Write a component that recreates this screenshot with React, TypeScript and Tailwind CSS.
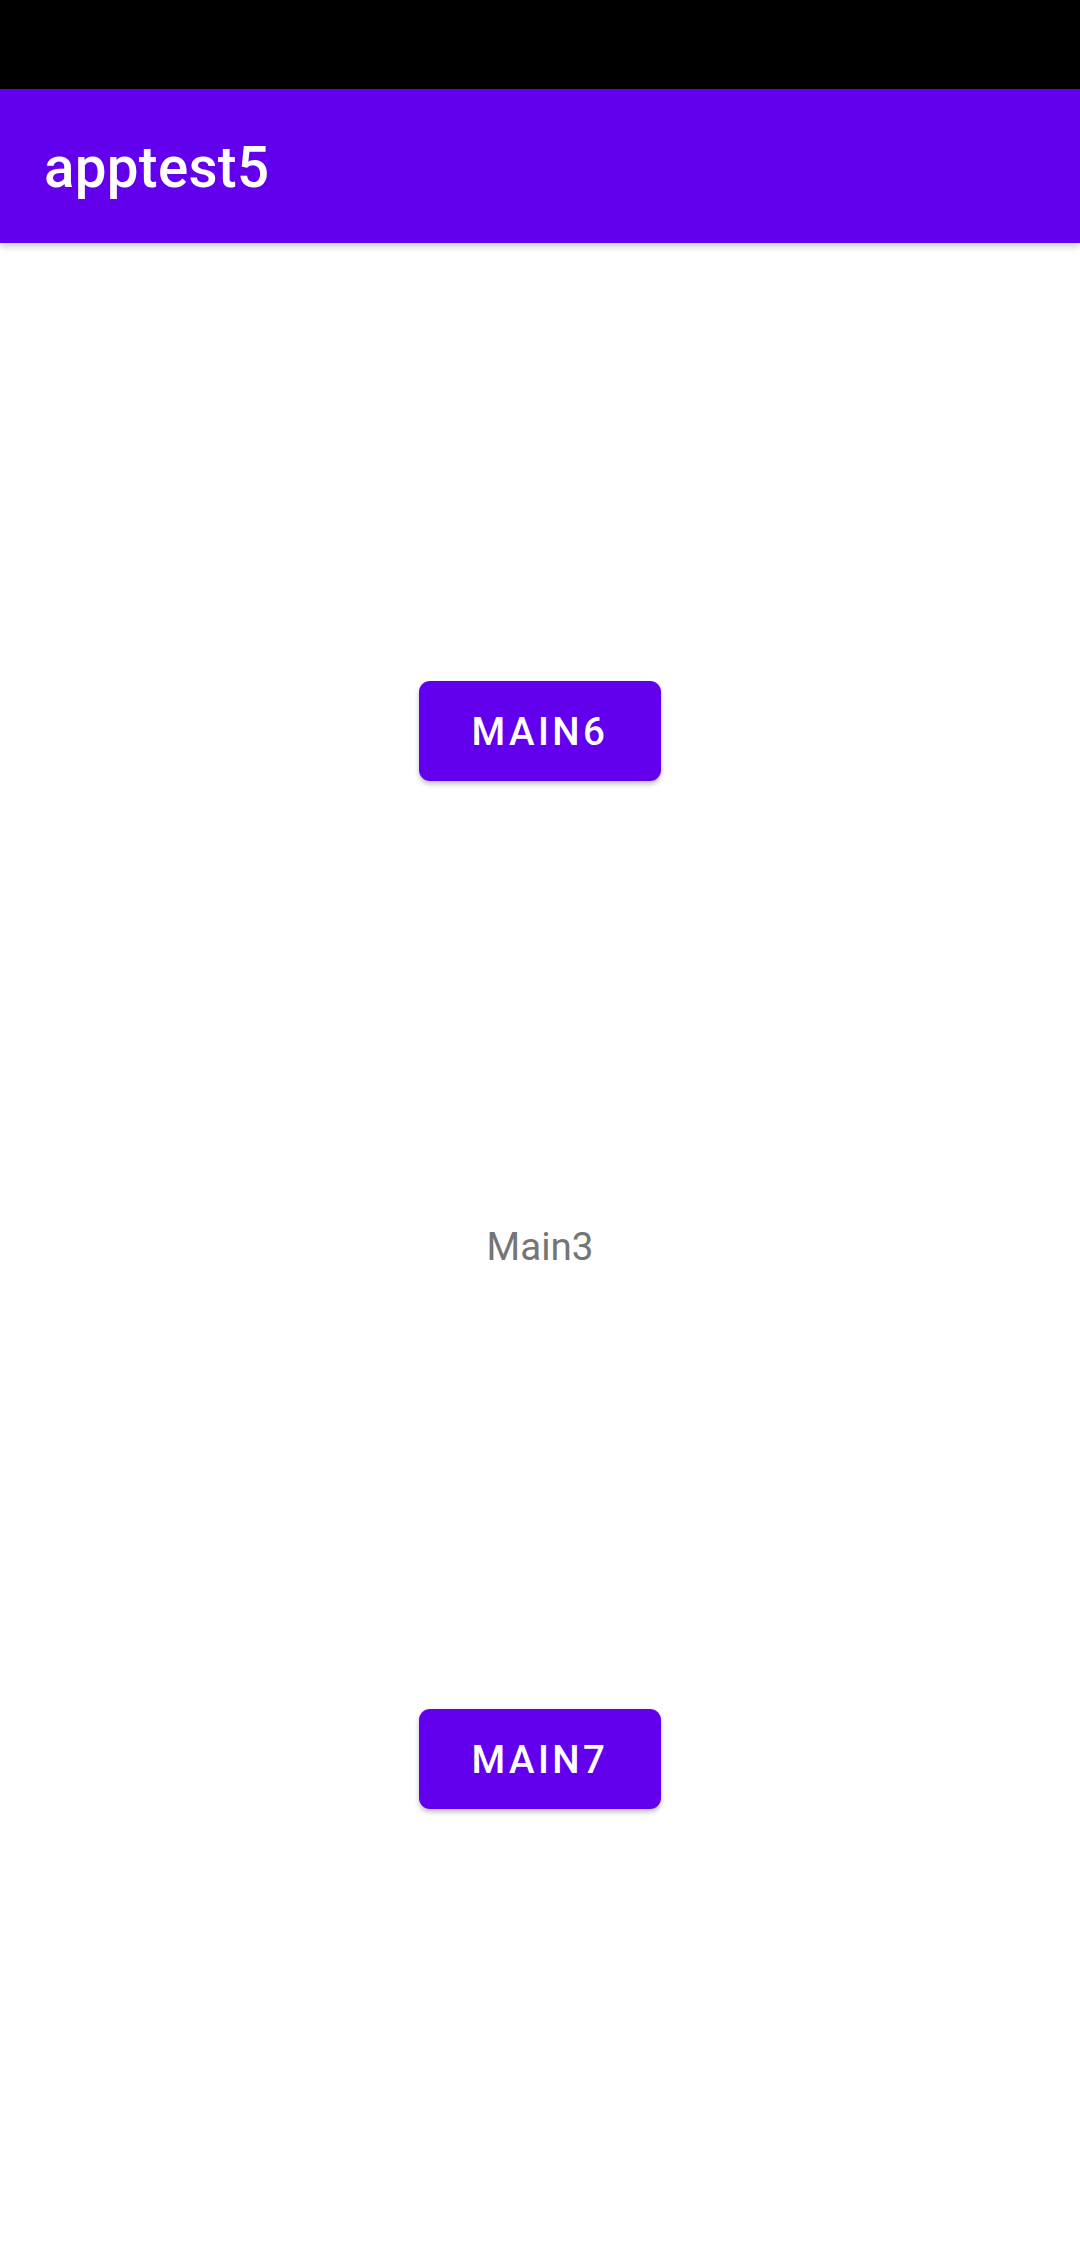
const PurpleButton = ({ label }: { label: string }) => (
  <button className="flex h-[100px] w-[242px] items-center justify-center rounded-[11px] bg-[#6200ee] pt-[2px] text-[38.5px] font-medium uppercase tracking-[0.0892em] text-white shadow-[0_3px_5px_rgba(0,0,0,0.25)]">
    {label}
  </button>
);

const App = () => {
  return (
    <div className="flex min-h-[2246px] w-[1080px] flex-col bg-white font-['Roboto',sans-serif]">
      <div className="h-[89px] bg-black" />
      <header className="relative z-10 flex h-[154px] items-center bg-[#6200ee] px-[44px] pt-[4px] shadow-[0_4px_6px_rgba(0,0,0,0.18)]">
        <h1 className="text-[56.5px] font-medium tracking-[0.005em] text-white">apptest5</h1>
      </header>
      <main className="flex flex-col items-center pt-[438px]">
        <PurpleButton label="Main6" />
        <p className="mt-[443px] text-[38.5px] leading-[45px] text-[#757575]">Main3</p>
        <div className="mt-[440px]">
          <PurpleButton label="Main7" />
        </div>
      </main>
    </div>
  );
};

export default App;
